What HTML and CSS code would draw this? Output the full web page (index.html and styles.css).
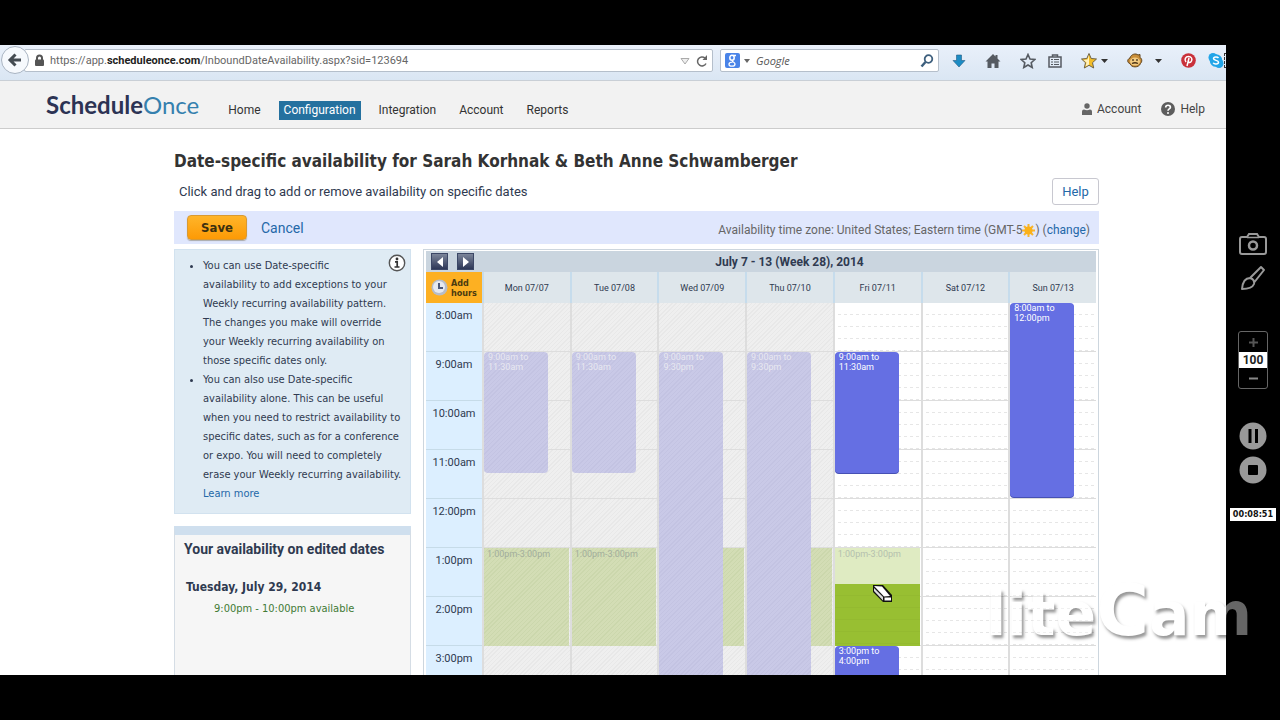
FILE: index.html
```
<!DOCTYPE html>
<html lang="en">
<head>
  <meta charset="UTF-8">
  <meta name="viewport" content="width=device-width, initial-scale=1.0">
  <title>ScheduleOnce - Date-specific availability</title>
  <link rel="stylesheet" href="styles.css">
</head>
<body>
  <div class="browser">
    <!-- Browser toolbar -->
    <div class="toolbar">
      <button class="back" aria-label="Back">
        <svg width="16" height="16" viewBox="0 0 16 16"><path d="M8.5 2.5 3 8l5.500 5.500M3.500 8H14" fill="none" stroke="#444b52" stroke-width="3"/></svg>
      </button>
      <div class="url-bar">
        <svg width="11" height="13" viewBox="0 0 11 13"><path d="M3 6V4a2.500 2.500 0 0 1 5 0v2" fill="none" stroke="#555" stroke-width="2"/><rect x="1" y="5.500" width="9" height="6.500" rx="1" fill="#555"/></svg>
        <span class="url">https://app.<b>scheduleonce.com</b>/InboundDateAvailability.aspx?sid=123694</span>
        <svg width="10" height="8" viewBox="0 0 10 8"><path d="M1 1.500h8L5 7z" fill="#eee" stroke="#aaa"/></svg>
        <svg width="14" height="14" viewBox="0 0 14 14"><path d="M11 9.500A4.500 4.500 0 1 1 10 4" fill="none" stroke="#666" stroke-width="1.500"/><path d="M12 1v5H7.500z" fill="#666"/></svg>
      </div>
      <div class="search-bar">
        <svg width="15" height="15" viewBox="0 0 15 15"><rect width="15" height="15" rx="2" fill="#4a84e8"/><ellipse cx="7" cy="4.800" rx="2.200" ry="2.500" fill="none" stroke="#fff" stroke-width="1.500"/><path d="M8 2.500h3M8 7.500c-2 1 2 1.500 2 3.500 0 1.500-1.500 2.200-3 2.200s-3-.7-3-2 1.500-2 3.500-2" fill="none" stroke="#fff" stroke-width="1.300"/></svg>
        <svg width="6" height="4" viewBox="0 0 6 4"><path d="M0 0h6L3 4z" fill="#666"/></svg>
        <input type="text" placeholder="Google" aria-label="Search">
        <svg width="14" height="14" viewBox="0 0 14 14"><circle cx="8.500" cy="5" r="3.800" fill="none" stroke="#3d5f7d" stroke-width="1.800"/><path d="M5.500 8 1.500 12.500" stroke="#3d5f7d" stroke-width="2.500"/></svg>
      </div>
      <div class="toolbar-icons">
        <svg width="14" height="14" viewBox="0 0 14 14"><path d="M4.500 1h5v5.500H13L7 13 1 6.500h3.500z" fill="#1c8cc4" stroke="#235d85" stroke-width=".6"/></svg>
        <svg class="apart" width="16" height="16" viewBox="0 0 16 16"><path d="M8 1 .5 8.500h2V15H6.500v-4.500h3V15h4V8.500h2L12.500 5.500V2h-2v1.500z" fill="#555a61"/></svg>
        <svg class="apart" width="16" height="16" viewBox="0 0 16 16"><path d="m8 1.500 2 4.500 4.800.5-3.600 3.200 1 4.800L8 12l-4.200 2.500 1-4.800L1.200 6.500 6 6z" fill="none" stroke="#555a61" stroke-width="1.600"/></svg>
        <svg width="14" height="14" viewBox="0 0 14 14"><path d="M1 3h12v10H1zM4.500 3V1h5v2" fill="none" stroke="#555a61" stroke-width="1.500"/><path d="M3 5.500h2m1 0h5M3 8h2m1 0h5M3 10.500h2m1 0h5" fill="none" stroke="#555a61"/></svg>
        <svg class="apart" width="27" height="16" viewBox="0 0 27 16"><path d="m8 .5 2.200 5 5.300.5-4 3.700 1.200 5.300L8 12.300 3.300 15l1.200-5.300L.5 6l5.300-.5z" fill="#f3bd27" stroke="#6d6247"/><path d="M8 2v9.500L4.500 13.500l1-4L2.500 7l4-.5z" fill="#fff1bd"/><path d="M20 6h7l-3.500 4z" fill="#333"/></svg>
        <svg class="apart" width="16" height="16" viewBox="0 0 16 16"><path d="M3 5C4 1 9 0 11 2l2-.5v3c2 1 2.500 4 .5 6C12 15 4 15 3 10.500 0 10 0 6 3 5z" fill="#c98e38" stroke="#5f431c"/><ellipse cx="8" cy="8.500" rx="5" ry="4" fill="#f1ca80"/><path d="M6 6v2m4-2v2M5 10.500q3-1.500 6 0" stroke="#4c3416" stroke-width="1.300" fill="none"/></svg>
        <svg width="7" height="4" viewBox="0 0 7 4"><path d="M0 0h7L3.500 4z" fill="#333"/></svg>
        <svg class="apart" width="15" height="15" viewBox="0 0 15 15"><circle cx="7.500" cy="7.500" r="7.300" fill="#c9303a"/><path d="m6 13 2-8M5 9C3 6.500 4.500 3.500 7.500 3.500S11.500 6 10.500 8 8 9.800 7.200 8.500" fill="none" stroke="#fff" stroke-width="1.500"/></svg>
        <svg width="16" height="15" viewBox="0 0 16 15"><circle cx="5" cy="4.500" r="4.500" fill="#22a5e8"/><circle cx="11" cy="10.500" r="4.500" fill="#22a5e8"/><circle cx="8" cy="7.500" r="6.300" fill="#22a5e8"/><path d="M10.500 5C9.500 3.500 5.500 3.500 5.500 5.600s5 1.400 5 3.600S6 11.500 5.200 9.800" fill="none" stroke="#fff" stroke-width="1.500"/></svg>
        <span class="more"></span>
      </div>
    </div>

    <header class="site-header">
      <a class="logo" href="#"><b>Schedule</b>Once</a>
      <nav>
        <a href="#">Home</a>
        <a href="#" class="active">Configuration</a>
        <a href="#">Integration</a>
        <a href="#">Account</a>
        <a href="#">Reports</a>
      </nav>
      <div class="user-links">
        <a href="#">
          <svg width="10" height="12" viewBox="0 0 10 12"><circle cx="5" cy="3" r="2.700" fill="#666"/><path d="M0 12V8.500Q0 6.500 2 6.500q3 1.500 6 0 2 0 2 2V12z" fill="#666"/></svg>
          Account
        </a>
        <a href="#">
          <svg width="14" height="14" viewBox="0 0 14 14"><circle cx="7" cy="7" r="7" fill="#5d5d5d"/><path d="M4.700 5.500C4.700 2.500 9.500 2.600 9.400 5.300 9.400 7 7 6.800 7 8.800" fill="none" stroke="#fff" stroke-width="1.700"/><circle cx="7" cy="10.900" r="1" fill="#fff"/></svg>
          Help
        </a>
      </div>
    </header>

    <main>
      <h1>Date-specific availability for Sarah Korhnak &amp; Beth Anne Schwamberger</h1>
      <div class="intro">
        <p>Click and drag to add or remove availability on specific dates</p>
        <button class="help-btn">Help</button>
      </div>

      <div class="action-bar">
        <button class="save-btn">Save</button>
        <a href="#">Cancel</a>
        <p class="timezone">Availability time zone: United States; Eastern time (GMT-5<svg width="13" height="13" viewBox="0 0 13 13"><path d="M6.500 0v13M0 6.500h13M2 2l9 9M11 2l-9 9" stroke="#f7b52c" stroke-width="2"/><circle cx="6.500" cy="6.500" r="4" fill="#fbb118"/></svg>) (<a href="#">change</a>)</p>
      </div>

      <div class="columns">
        <aside>
          <section class="tips">
            <svg class="info" width="18" height="18" viewBox="0 0 18 18"><circle cx="9" cy="9" r="7.700" fill="#fff" stroke="#555" stroke-width="1.400"/><circle cx="9" cy="5" r="1.400" fill="#333"/><path d="M7 7.800h2.200v5M6.500 13h5" fill="none" stroke="#333" stroke-width="1.700"/></svg>
            <ul>
              <li>You can use Date-specific<br>availability to add exceptions to your Weekly recurring availability pattern. The changes you make will override your Weekly recurring availability on those specific dates only.</li>
              <li>You can also use Date-specific availability alone. This can be useful when you need to restrict availability to specific dates, such as for a conference or expo. You will need to completely erase your Weekly recurring availability.<br><a href="#">Learn more</a></li>
            </ul>
          </section>
          <section class="edited">
            <h2>Your availability on edited dates</h2>
            <h3>Tuesday, July 29, 2014</h3>
            <p>9:00pm - 10:00pm available</p>
          </section>
        </aside>

        <section class="calendar">
          <div class="week-bar">
            <button aria-label="Previous week"><svg width="8" height="10" viewBox="0 0 8 10"><path d="M7 0v10L1 5z" fill="#fff"/></svg></button>
            <button aria-label="Next week"><svg width="8" height="10" viewBox="0 0 8 10"><path d="M1 0v10l6-5z" fill="#fff"/></svg></button>
            <h2>July 7 - 13 (Week 28), 2014</h2>
          </div>
          <table>
            <thead>
              <tr>
                <th class="add">
                  <button>
                    <svg width="17" height="17" viewBox="0 0 17 17"><circle cx="8.500" cy="8.500" r="8" fill="#b7bdc8"/><circle cx="8" cy="8" r="6" fill="#e6e9ef"/><path d="M8 4v5h4" fill="none" stroke="#4c5878" stroke-width="2"/></svg>
                    <span>Add hours</span>
                  </button>
                </th>
                <th>Mon 07/07</th><th>Tue 07/08</th><th>Wed 07/09</th><th>Thu 07/10</th><th>Fri 07/11</th><th>Sat 07/12</th><th>Sun 07/13</th>
              </tr>
            </thead>
            <tbody>
              <tr>
                <th>8:00am</th>
                <td class="past"></td><td class="past"></td><td class="past"></td><td class="past"></td>
                <td></td><td></td>
                <td><div class="event" style="height: 194px">8:00am to 12:00pm</div></td>
              </tr>
              <tr>
                <th>9:00am</th>
                <td class="past"><div class="event" style="height: 121px">9:00am to 11:30am</div></td>
                <td class="past"><div class="event" style="height: 121px">9:00am to 11:30am</div></td>
                <td class="past"><div class="event" style="height: 611px">9:00am to 9:30pm</div></td>
                <td class="past"><div class="event" style="height: 611px">9:00am to 9:30pm</div></td>
                <td><div class="event" style="height: 121px">9:00am to 11:30am</div></td>
                <td></td><td></td>
              </tr>
              <tr><th>10:00am</th><td class="past"></td><td class="past"></td><td class="past"></td><td class="past"></td><td></td><td></td><td></td></tr>
              <tr><th>11:00am</th><td class="past"></td><td class="past"></td><td class="past"></td><td class="past"></td><td></td><td></td><td></td></tr>
              <tr><th>12:00pm</th><td class="past"></td><td class="past"></td><td class="past"></td><td class="past"></td><td></td><td></td><td></td></tr>
              <tr>
                <th>1:00pm</th>
                <td class="past"><div class="open" style="height: 98px">1:00pm-3:00pm</div></td>
                <td class="past"><div class="open" style="height: 98px">1:00pm-3:00pm</div></td>
                <td class="past"><div class="open" style="height: 98px"></div></td>
                <td class="past"><div class="open" style="height: 98px"></div></td>
                <td><div class="open" style="height: 98px">1:00pm-3:00pm<div class="kept" style="height: 62px"></div></div>
                  <svg class="eraser" width="22" height="20" viewBox="0 0 22 20"><path d="M1 1h10l9 10v7h-9L1 8z" fill="#111"/><path d="m2 2 8 .5 8 9.500-6 .5z" fill="#fff"/><path d="m2 4 9 9v3.500L2 7z" fill="#ddd"/><path d="M12.500 13.500H19v3h-6.500z" fill="#fff"/></svg>
                </td>
                <td></td><td></td>
              </tr>
              <tr><th>2:00pm</th><td class="past"></td><td class="past"></td><td class="past"></td><td class="past"></td><td></td><td></td><td></td></tr>
              <tr>
                <th>3:00pm</th>
                <td class="past"></td><td class="past"></td><td class="past"></td><td class="past"></td>
                <td><div class="event" style="height: 48px">3:00pm to 4:00pm</div></td>
                <td></td><td></td>
              </tr>
            </tbody>
          </table>
        </section>
      </div>
    </main>
  </div>

  <!-- Recorder controls -->
  <div class="recorder">
    <button aria-label="Snapshot"><svg width="28" height="22" viewBox="0 0 28 22"><path d="M3 4h5l2-3h8l2 3h5q2 0 2 2v13q0 2-2 2H3q-2 0-2-2V6q0-2 2-2z" fill="none" stroke="#999" stroke-width="2"/><path d="M8 4.500h12" stroke="#999" stroke-width="1.500"/><circle cx="14" cy="12.500" r="4" fill="none" stroke="#999" stroke-width="2.500"/></svg></button>
    <button class="draw" aria-label="Draw"><svg width="26" height="26" viewBox="0 0 26 26"><path d="M10 13 21 2l3 3-9.500 12M2 24q1-11 8-11 5 1.500 4 6-2 5-12 5z" fill="none" stroke="#999" stroke-width="2" stroke-linejoin="round"/></svg></button>
    <div class="zoom">
      <button aria-label="Zoom in"><svg width="9" height="9" viewBox="0 0 9 9"><path d="M4.500 0v9M0 4.500h9" stroke="#555" stroke-width="2"/></svg></button>
      <output>100</output>
      <button aria-label="Zoom out"><svg width="9" height="9" viewBox="0 0 9 9"><path d="M0 4.500h9" stroke="#888" stroke-width="2"/></svg></button>
    </div>
    <button class="pause" aria-label="Pause"><svg width="28" height="28" viewBox="0 0 28 28"><circle cx="14" cy="14" r="13.500" fill="#999"/><path d="M11 7v14M17.500 7v14" stroke="#000" stroke-width="3"/></svg></button>
    <button class="stop" aria-label="Stop"><svg width="28" height="28" viewBox="0 0 28 28"><circle cx="14" cy="14" r="13.500" fill="#999"/><rect x="9" y="9" width="10" height="10" rx="1" fill="#000"/></svg></button>
    <time>00:08:51</time>
  </div>

  <div class="watermark">lite<span>C</span>am</div>
</body>
</html>
```
FILE: styles.css
```
* {
  box-sizing: border-box;
}
body {
  margin: 0;
  height: 100vh;
  padding: 45px 0;
  display: flex;
  overflow: hidden;
  background: #000;
  color: #2f3a50;
  font-family: Roboto, sans-serif;
  font-size: 12px;
}
h1, h2, h3, p, ul {
  margin: 0;
}
h1, h3, .save-btn, .add button, .tips, .edited p, time {
  font-family: "DejaVu Sans Condensed", sans-serif;
}
a {
  color: #2468a8;
  text-decoration: none;
}
button {
  font-family: inherit;
  cursor: pointer;
  padding: 0;
  border: none;
  background: none;
}
svg {
  display: block;
  flex: none;
}
.browser {
  flex: 1;
  min-width: 0;
  overflow: hidden;
  background: #fff;
}

/* browser toolbar */
.toolbar {
  height: 36px;
  display: flex;
  align-items: flex-start;
  padding-top: 4px;
  background: linear-gradient(#e9f0fa, #dae6f3);
  border-bottom: 1px solid #c9cfd6;
}
.back {
  width: 28px;
  height: 28px;
  margin: -3px 0 0 1px;
  border: 1px solid #a9b4c2;
  border-radius: 50%;
  background: #f6f9fd;
  display: flex;
  align-items: center;
  justify-content: center;
  position: relative;
}
.url-bar, .search-bar {
  height: 23px;
  display: flex;
  align-items: center;
  background: #fff;
  border: 1px solid #b5bfcb;
  border-radius: 2px;
}
.url-bar {
  flex: 1;
  gap: 5px;
  margin-left: -5px;
  padding: 0 3px 0 9px;
  color: #666;
  font-size: 11px;
}
.url {
  flex: 1;
}
.url b {
  color: #222;
}
.search-bar {
  width: 219px;
  margin-left: 7px;
  padding: 0 4px;
  gap: 4px;
}
.search-bar input {
  flex: 1;
  min-width: 0;
  border: none;
  padding: 0 0 0 2px;
  font: italic 11px "Open Sans", sans-serif;
}
.search-bar input::placeholder {
  color: #555;
}
.toolbar-icons {
  width: 287px;
  height: 23px;
  display: flex;
  align-items: center;
  gap: 12px;
  padding-left: 13px;
}
.apart {
  margin-left: 7px;
}
.more {
  width: 3px;
  height: 15px;
  margin-left: -12px;
  border: 1px dashed #333;
  border-right: none;
}

/* site header */
.site-header {
  height: 48px;
  display: flex;
  align-items: center;
  padding: 0 21px 0 46px;
  background: #f2f2f2;
  border-bottom: 1px solid #ccc;
}
.logo {
  color: #3580ae;
  font: 24px Lato, sans-serif;
}
.logo b {
  color: #2c3354;
}
nav {
  display: flex;
  gap: 13px;
  margin: 12px 0 0 24px;
}
nav a {
  padding: 0 5px;
  line-height: 19px;
  font-size: 12px;
  color: #333;
}
nav a.active {
  background: #24719f;
  color: #fff;
}
.user-links {
  display: flex;
  gap: 20px;
  margin: 8px 0 0 auto;
}
.user-links a {
  display: flex;
  align-items: center;
  gap: 5px;
  font-size: 12px;
  color: #444;
}

/* page content */
main {
  padding: 20px 127px 0 174px;
}
h1 {
  font-size: 17px;
  line-height: 24px;
  color: #333;
}
.intro {
  display: flex;
  align-items: center;
  justify-content: space-between;
  padding: 5px 0 6px 5px;
  font-size: 13px;
}
.help-btn {
  width: 47px;
  height: 27px;
  border: 1px solid #c8c8d0;
  border-radius: 3px;
  background: #fff;
  color: #2468a8;
  font-size: 13px;
}
.action-bar {
  height: 33px;
  display: flex;
  align-items: center;
  gap: 14px;
  padding: 0 9px 0 13px;
  background: #e0e7fd;
  font-size: 14px;
}
.save-btn {
  width: 60px;
  height: 25px;
  border: 1px solid #d99a33;
  border-radius: 4px;
  background: linear-gradient(#ffb52a, #fd9a05);
  box-shadow: 0 1px 1px #aaa;
  color: #3b3010;
  font-size: 13px;
  font-weight: bold;
}
.timezone {
  display: flex;
  align-items: center;
  margin: 5px 0 0 auto;
  color: #666;
  font-size: 12px;
}
.columns {
  display: flex;
  align-items: flex-start;
  gap: 12px;
  padding-top: 5px;
}
aside {
  flex: 0 0 237px;
}
.tips {
  position: relative;
  padding: 6px 7px 10px 0;
  background: #dfebf4;
  border: 1px solid #d2e2ef;
}
.info {
  position: absolute;
  top: 4px;
  right: 4px;
}
.tips ul {
  padding-left: 28px;
}
.tips li {
  line-height: 19px;
  font-size: 11px;
}
.edited {
  height: 200px;
  margin-top: 12px;
  padding: 5px 9px;
  background: #f6f6f6;
  border: 1px solid #d5dde5;
  border-top: 9px solid #cfdfee;
}
.edited h2 {
  font-size: 14px;
  line-height: 18px;
}
.edited h3 {
  margin: 20px 0 0 2px;
  font-size: 12px;
  line-height: 18px;
}
.edited p {
  margin: 4px 0 0 30px;
  color: #427a35;
  font-size: 11px;
  line-height: 18px;
}

/* week calendar */
.calendar {
  flex: 1;
  min-width: 0;
  padding: 1px 2px;
  border: 1px solid #cdd6de;
}
.week-bar {
  height: 21px;
  display: flex;
  align-items: center;
  gap: 9px;
  padding-left: 5px;
  background: #cad5df;
}
.week-bar button {
  width: 17px;
  height: 17px;
  border: 1px solid #3c4766;
  background: linear-gradient(#7c859a, #2d3757);
  display: flex;
  align-items: center;
  justify-content: center;
}
.week-bar h2 {
  flex: 1;
  text-align: center;
  font-size: 12px;
}
table {
  width: 100%;
  table-layout: fixed;
  border-spacing: 0;
}
thead th {
  height: 31px;
  padding: 0;
  border-left: 2px solid #c6dcec;
  background: #dee6eb;
  font-size: 9px;
  font-weight: normal;
}
thead .add {
  width: 56px;
  border: none;
  background: #fdb022;
}
.add button {
  display: flex;
  align-items: center;
  gap: 3px;
  padding-left: 5px;
  color: #4b3b10;
  font-size: 9px;
  font-weight: bold;
  line-height: 10px;
  text-align: left;
}
tbody th {
  height: 49px;
  padding: 6px 0 0;
  border-bottom: 1px solid #c6dbe8;
  background: #dcefff;
  font-size: 11px;
  font-weight: normal;
  vertical-align: top;
}
td {
  --cell: #fff;
  position: relative;
  padding: 0;
  border-left: 2px solid #ddd;
  border-bottom: 1px solid #ddd;
  /* quarter-hour dashes */
  background:
    repeating-linear-gradient(90deg, var(--cell) 0 3px, transparent 3px 6px),
    repeating-linear-gradient(var(--cell) 0 11px, #e6e6e6 11px 12px);
}
td.past {
  --cell: #eee;
}
td.past::before {
  content: "";
  position: absolute;
  inset: 0;
  background: repeating-linear-gradient(135deg, #e8e8e8 0 1px, #efefef 1px 3px);
}
.event, .open {
  position: absolute;
  top: 0;
  left: 0;
  font-size: 9px;
  line-height: 10px;
}
.event {
  z-index: 2;
  width: 64px;
  padding: 0 3px 0 4px;
  border-radius: 4px;
  background: #656fe3;
  box-shadow: 0 1px 0 #4650b4;
  color: #fff;
}
.past .event {
  background: repeating-linear-gradient(135deg, #c3c3e2 0 1px, #c9c9e7 1px 3px);
  box-shadow: none;
  color: #e8e8f0;
}
.open {
  z-index: 1;
  right: 1px;
  padding: 1px 0 0 3px;
  background: #dfebc2;
  color: #b4bfae;
}
.past .open {
  background: repeating-linear-gradient(135deg, #cbd7ac 0 1px, #d3ddb5 1px 3px);
  color: #a2ad9c;
}
.kept {
  position: absolute;
  left: 0;
  right: 0;
  bottom: 0;
  background: repeating-linear-gradient(#98bf32 0 11px, #94ba30 11px 12px);
}
.eraser {
  position: absolute;
  z-index: 3;
  top: 36px;
  left: 37px;
}

/* recorder */
.recorder {
  flex: 0 0 54px;
  display: flex;
  flex-direction: column;
  align-items: center;
  padding-top: 188px;
}
.draw {
  margin-top: 10px;
}
.zoom {
  width: 30px;
  margin-top: 40px;
  border: 1px solid #666;
  border-radius: 3px;
}
.zoom button {
  width: 100%;
  height: 20px;
  display: flex;
  align-items: center;
  justify-content: center;
}
.zoom output {
  display: block;
  background: #fff;
  color: #222;
  font-weight: bold;
  line-height: 16px;
  text-align: center;
}
.pause {
  margin-top: 33px;
}
.stop {
  margin-top: 6px;
}
time {
  margin-top: 24px;
  padding: 0 3px;
  background: #fff;
  color: #111;
  font-size: 9px;
  font-weight: bold;
  line-height: 13px;
}
.watermark {
  position: absolute;
  z-index: 10;
  right: 28px;
  bottom: 70px;
  opacity: .4;
  color: #fff;
  font: bold 60px/72px "DejaVu Sans", sans-serif;
  text-shadow: 2px 3px 3px #000;
  pointer-events: none;
}
.watermark span {
  font-size: 72px;
}
```
